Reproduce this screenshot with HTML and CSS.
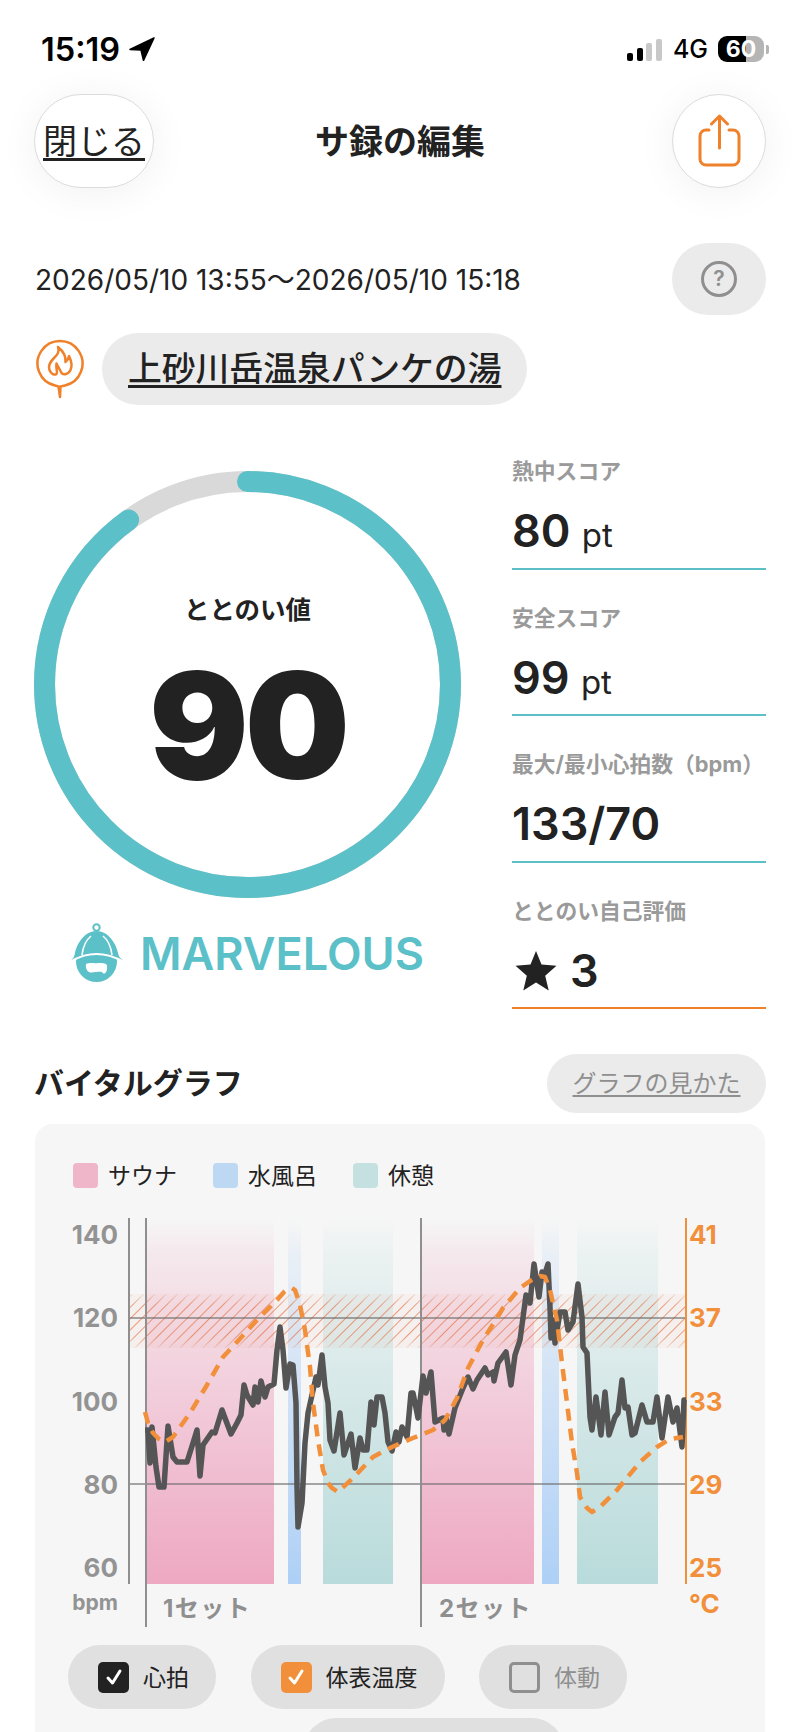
FILE: index.html
```html
<!DOCTYPE html>
<html lang="ja">
<head>
    <meta charset="UTF-8">
    <meta name="viewport" content="width=device-width, initial-scale=1.0">
    <title>サ録の編集</title>
    <link rel="stylesheet" href="styles.css">
</head>
<body>
<div class="screen">
    <div class="statusbar">
        <div class="status-left">
            <span class="clock">15:19</span>
            <svg class="location" width="26" height="24" viewBox="0 0 26 24"><path d="M25 1 L1 12.500 L12 13 L14.500 23.500 Z" fill="#000" stroke="#000" stroke-width="1.500" stroke-linejoin="round"/></svg>
        </div>
        <div class="status-right">
            <div class="signal">
                <span class="bar bar1"></span>
                <span class="bar bar2"></span>
                <span class="bar bar3"></span>
                <span class="bar bar4"></span>
            </div>
            <span class="network">4G</span>
            <div class="battery"><span class="battery-level">60</span><span class="battery-nub"></span></div>
        </div>
    </div>

    <div class="content">
        <div class="topbar">
            <a class="round-btn close-btn"><span class="close-text">閉じる</span></a>
            <h1 class="title">サ録の編集</h1>
            <a class="round-btn share-btn">
                <svg width="44" height="54" viewBox="0 0 44 54" fill="none" stroke="#f0812b" stroke-width="3" stroke-linecap="round" stroke-linejoin="round">
                    <path d="M12 16 H9 a6 6 0 0 0 -6 6 V45 a6 6 0 0 0 6 6 H36 a6 6 0 0 0 6 -6 V22 a6 6 0 0 0 -6 -6 H32"/>
                    <path d="M22.500 34 V2 M14.500 10 L22.500 2 L30.500 10"/>
                </svg>
            </a>
        </div>

        <div class="date-row">
            <span class="date">2026/05/10 13:55～2026/05/10 15:18</span>
            <a class="help-btn"><span class="help-mark">?</span></a>
        </div>

        <div class="place-row">
            <svg class="place-icon" width="48" height="60" viewBox="0 0 48 60" fill="none" stroke="#f0812b" stroke-width="2.500" stroke-linejoin="round" stroke-linecap="round">
                <path d="M19 46.500 A22.500 22.500 0 1 1 29 46.500 L24.500 47.500 L24 58 L22.500 47.500 Z"/>
                <path d="M22 8 C24 13 21 16 18 19 C14 23 12 27 13.500 31 C15 35 18.500 36.500 20.500 35 C22 33.500 19.500 29 20.500 24.500 C22 28 23.500 30 25 33 C26.500 36.500 32 36 34.500 31 C36.500 26.500 35 21 33 17 C32.500 20 31 22 29.500 23 C30 17 27 12 22 8 Z"/>
            </svg>
            <a class="place-pill">上砂川岳温泉パンケの湯</a>
        </div>

        <div class="score-section">
            <div class="score-left">
                <div class="ring">
                    <svg width="427" height="427" viewBox="0 0 427 427" fill="none" stroke-width="21">
                        <circle cx="213.500" cy="213.500" r="203" stroke="#d9d9d9"/>
                        <circle class="ring-value" cx="213.500" cy="213.500" r="203" stroke="#5cc0c8" stroke-linecap="round" stroke-dasharray="1148 1276"/>
                    </svg>
                    <div class="ring-text">
                        <div class="ring-label">ととのい値</div>
                        <div class="ring-number">90</div>
                    </div>
                </div>
                <div class="rank">
                    <svg width="52" height="60" viewBox="0 0 52 60">
                        <circle cx="25.500" cy="4.500" r="3.200" fill="none" stroke="#5cc0c8" stroke-width="2"/>
                        <circle cx="25.500" cy="38.500" r="20.500" fill="#5cc0c8"/>
                        <path d="M0 38.500 C8 33.500 17 31 25.500 31 C34 31 43 33.500 52 38.500" fill="none" stroke="#fff" stroke-width="2"/>
                        <path d="M0 37.500 C3 35 3 34 4 30 C6 20 14 8 25.500 8 C37 8 45 20 47 30 C48 34 49 35 52 37.500 C43 32 34 29.500 25.500 29.500 C17 29.500 8 32 0 37.500 Z" fill="#5cc0c8"/>
                        <path d="M20 13 C15 17 12 24 11 32 M32 13 C37 17 40 24 41 32" fill="none" stroke="#fff" stroke-width="1.600"/>
                        <path d="M15 41 C20 39 24 41 27 40 C31 40 34 40 36 42 C36 45 36.500 47 35 49 C34 51 32 51 31 49 C27 48 21 50.500 18 49 C15.500 48 14.500 44 15 41 Z" fill="#fff"/>
                    </svg>
                    <span class="rank-name">MARVELOUS</span>
                </div>
            </div>

            <div class="score-right">
                <div class="stat">
                    <div class="stat-label">熱中スコア</div>
                    <div class="stat-value">80 <span class="stat-unit">pt</span></div>
                </div>
                <div class="stat">
                    <div class="stat-label">安全スコア</div>
                    <div class="stat-value">99 <span class="stat-unit">pt</span></div>
                </div>
                <div class="stat">
                    <div class="stat-label">最大/最小心拍数（bpm）</div>
                    <div class="stat-value">133/70</div>
                </div>
                <div class="stat stat-orange">
                    <div class="stat-label">ととのい自己評価</div>
                    <div class="stat-value stat-rating">
                        <svg width="42" height="40" viewBox="0 0 42 40"><path d="M21 0 L26.500 13.500 L41.500 14.800 L30.200 24.700 L33.700 39.500 L21 31.600 L8.300 39.500 L11.800 24.700 L0.500 14.800 L15.500 13.500 Z" fill="#222"/></svg>
                        <span>3</span>
                    </div>
                </div>
            </div>
        </div>

        <div class="vital-head">
            <h2 class="vital-title">バイタルグラフ</h2>
            <a class="graph-help">グラフの見かた</a>
        </div>

        <div class="vital-card">
            <div class="legend">
                <div class="legend-item"><span class="swatch swatch-sauna"></span><span class="legend-text">サウナ</span></div>
                <div class="legend-item"><span class="swatch swatch-water"></span><span class="legend-text">水風呂</span></div>
                <div class="legend-item"><span class="swatch swatch-rest"></span><span class="legend-text">休憩</span></div>
            </div>

            <!-- viewBox uses page coordinates so the traced points stay readable -->
            <svg class="chart" width="730" height="420" viewBox="35 1210 730 420">
                <defs>
                    <linearGradient id="gradSauna" x1="0" y1="0" x2="0" y2="1">
                        <stop offset="0" stop-color="#eea8c2" stop-opacity="0"/>
                        <stop offset="0.1" stop-color="#eea8c2" stop-opacity="0.18"/>
                        <stop offset="1" stop-color="#eea8c2"/>
                    </linearGradient>
                    <linearGradient id="gradWater" x1="0" y1="0" x2="0" y2="1">
                        <stop offset="0" stop-color="#aed0f6" stop-opacity="0"/>
                        <stop offset="0.1" stop-color="#aed0f6" stop-opacity="0.18"/>
                        <stop offset="1" stop-color="#aed0f6"/>
                    </linearGradient>
                    <linearGradient id="gradRest" x1="0" y1="0" x2="0" y2="1">
                        <stop offset="0" stop-color="#b9dbdb" stop-opacity="0"/>
                        <stop offset="0.1" stop-color="#b9dbdb" stop-opacity="0.18"/>
                        <stop offset="1" stop-color="#b9dbdb"/>
                    </linearGradient>
                    <pattern id="hatch" width="8" height="8" patternUnits="userSpaceOnUse" patternTransform="rotate(45)">
                        <line x1="0" y1="0" x2="0" y2="8" stroke="#e2693a" stroke-width="1.500" stroke-opacity="0.85"/>
                    </pattern>
                    <linearGradient id="fadeBand" x1="0" y1="0" x2="0" y2="1">
                        <stop offset="0" stop-color="#fff" stop-opacity="0.2"/>
                        <stop offset="0.2" stop-color="#fff"/>
                        <stop offset="0.8" stop-color="#fff"/>
                        <stop offset="1" stop-color="#fff" stop-opacity="0.2"/>
                    </linearGradient>
                    <mask id="bandMask"><rect x="129" y="1294" width="557" height="54" fill="url(#fadeBand)"/></mask>
                </defs>

                <rect x="147" y="1218" width="127" height="366" fill="url(#gradSauna)"/>
                <rect x="288" y="1218" width="13" height="366" fill="url(#gradWater)"/>
                <rect x="323" y="1218" width="70" height="366" fill="url(#gradRest)"/>
                <rect x="422" y="1218" width="112" height="366" fill="url(#gradSauna)"/>
                <rect x="542" y="1218" width="17" height="366" fill="url(#gradWater)"/>
                <rect x="577" y="1218" width="81" height="366" fill="url(#gradRest)"/>

                <rect x="129" y="1294" width="557" height="54" fill="#f0926a" fill-opacity="0.05"/>
                <rect x="129" y="1294" width="557" height="54" fill="url(#hatch)" mask="url(#bandMask)"/>

                <line class="grid-line" x1="129" y1="1318" x2="686" y2="1318"/>
                <line class="grid-line" x1="129" y1="1484" x2="686" y2="1484"/>
                <line class="axis-line" x1="129" y1="1218" x2="129" y2="1584"/>
                <line class="axis-line" x1="146" y1="1218" x2="146" y2="1627"/>
                <line class="axis-line" x1="421" y1="1218" x2="421" y2="1627"/>
                <line class="axis-line-temp" x1="686" y1="1218" x2="686" y2="1584"/>

                <polyline class="heart-line" points="145,1430 148,1430 150,1463 152,1427 156,1467 159,1487 164,1487 168,1426 173,1457 177,1462 187,1462 193,1443 197,1430 200,1476 203,1445 212,1432 215,1433 222,1410 231,1434 237,1423 241,1415 244,1385 247,1395 253,1405 255,1387 258,1402 261,1381 265,1397 268,1387 274,1384 277,1350 280,1327 283,1350 286,1388 290,1364 293,1365 296,1403 297,1487 298,1527 302,1503 305,1443 308,1413 316,1377 318,1385 322,1355 325,1387 328,1403 330,1440 334,1451 340,1413 344,1455 351,1434 355,1468 360,1438 363,1450 367,1450 371,1402 374,1425 377,1397 382,1397 385,1413 388,1442 392,1451 396,1432 399,1442 402,1427 407,1437 411,1393 413,1393 418,1418 423,1376 426,1393 431,1372 435,1422 443,1418 444,1430 446,1418 449,1434 455,1408 463,1388 468,1377 473,1389 477,1380 485,1368 488,1375 493,1372 494,1381 498,1363 506,1352 511,1385 515,1355 520,1340 526,1295 530,1303 534,1264 539,1297 542,1272 544,1277 548,1264 550,1307 551,1338 553,1320 555,1343 560,1312 565,1312 568,1330 573,1322 578,1284 582,1317 583,1347 587,1353 590,1417 592,1430 596,1397 601,1435 605,1392 609,1435 615,1417 618,1413 622,1380 625,1408 628,1407 632,1435 635,1433 642,1405 647,1422 653,1422 657,1397 662,1438 668,1397 673,1422 677,1408 682,1447 684,1400 686,1400"/>
                <polyline class="temp-line" points="145,1412 148,1423 153,1433 159,1439 165,1442 173,1437 190,1413 207,1385 223,1357 237,1342 257,1320 277,1300 284,1292 288,1289 292,1288 295,1290 300,1305 305,1330 310,1367 313,1403 318,1440 323,1470 328,1483 332,1488 338,1492 353,1478 373,1457 392,1447 413,1438 433,1430 445,1420 457,1398 468,1368 483,1340 497,1318 503,1308 520,1288 533,1279 540,1276 545,1277 550,1290 557,1320 562,1363 567,1403 572,1443 577,1473 580,1497 587,1508 592,1512 600,1507 617,1490 640,1462 657,1447 670,1439 683,1437"/>

                <text class="tick" x="118" y="1244">140</text>
                <text class="tick" x="118" y="1327">120</text>
                <text class="tick" x="118" y="1411">100</text>
                <text class="tick" x="118" y="1494">80</text>
                <text class="tick" x="118" y="1577">60</text>
                <text class="tick tick-unit" x="118" y="1610">bpm</text>
                <text class="tick-temp" x="689" y="1244">41</text>
                <text class="tick-temp" x="689" y="1327">37</text>
                <text class="tick-temp" x="689" y="1411">33</text>
                <text class="tick-temp" x="689" y="1494">29</text>
                <text class="tick-temp" x="689" y="1577">25</text>
                <text class="tick-temp" x="689" y="1613">°C</text>
                <text class="set-label" x="163" y="1617">1セット</text>
                <text class="set-label" x="439" y="1617">2セット</text>
            </svg>

            <div class="toggles">
                <div class="toggle">
                    <span class="check check-dark"><svg width="22" height="22" viewBox="0 0 22 22"><path d="M5 12 L9.500 17 L17 5" fill="none" stroke="#fff" stroke-width="3" stroke-linecap="round" stroke-linejoin="round"/></svg></span>
                    <span class="toggle-text">心拍</span>
                </div>
                <div class="toggle">
                    <span class="check check-orange"><svg width="22" height="22" viewBox="0 0 22 22"><path d="M5 12 L9.500 17 L17 5" fill="none" stroke="#fff" stroke-width="3" stroke-linecap="round" stroke-linejoin="round"/></svg></span>
                    <span class="toggle-text">体表温度</span>
                </div>
                <div class="toggle toggle-off">
                    <span class="check check-empty"></span>
                    <span class="toggle-text">体動</span>
                </div>
            </div>
            <div class="more-pill"></div>
        </div>
    </div>
</div>
</body>
</html>
```
FILE: styles.css
```css
html, body {
    margin: 0;
    padding: 0;
    height: 1732px;
    overflow: hidden;
    background-color: #fff;
}

body {
    font-family: Inter, "Noto Sans CJK JP", sans-serif;
    font-optical-sizing: none;
    color: #222;
}

.screen {
    height: 1732px;
    overflow: hidden;
}

/* status bar */
.statusbar {
    box-sizing: border-box;
    height: 94px;
    padding: 4px 31px 0 41px;
    display: flex;
    justify-content: space-between;
    align-items: center;
    color: #000;
}

.status-left {
    display: flex;
    align-items: center;
    gap: 9px;
}

.clock {
    font-size: 32.500px;
    font-weight: 600;
}

.status-right {
    display: flex;
    align-items: center;
}

.signal {
    display: flex;
    align-items: flex-end;
    gap: 3.5px;
    height: 22px;
    margin-top: 1px;
}

.bar {
    width: 6px;
    border-radius: 2px;
    background-color: #000;
}

.bar1 { height: 8px; }
.bar2 { height: 13px; }
.bar3 { height: 18px; background-color: #c8c8c8; }
.bar4 { height: 22px; background-color: #c8c8c8; }

.network {
    font-size: 25px;
    font-weight: 500;
    margin: 0 10px 0 11px;
}

.battery {
    display: flex;
    align-items: center;
    gap: 2px;
}

.battery-level {
    width: 46px;
    height: 26px;
    border-radius: 9px;
    background: linear-gradient(90deg, #000 61%, #b5b5b5 61%);
    color: #fff;
    font-size: 23px;
    font-weight: 700;
    line-height: 26px;
    text-align: center;
}

.battery-nub {
    width: 3px;
    height: 9px;
    border-radius: 0 2px 2px 0;
    background-color: #b5b5b5;
}

/* main */
.content {
    padding: 0 34px;
}

.topbar {
    height: 94px;
    display: grid;
    grid-template-columns: 1fr auto 1fr;
    align-items: center;
}

.round-btn {
    box-sizing: border-box;
    height: 94px;
    border: 1px solid #dcdcdc;
    border-radius: 47px;
    background-color: #fff;
    box-shadow: 0 4px 40px rgba(0, 0, 0, 0.06);
    display: flex;
    justify-content: center;
    align-items: center;
}

.close-btn {
    width: 120px;
    font-size: 34px;
}

.close-text {
    margin-bottom: 4px;
    text-decoration: underline;
    text-underline-offset: 4px;
}

.share-btn {
    width: 94px;
    justify-self: end;
}

.title {
    margin: 0 0 4px;
    font-size: 34px;
    font-weight: 700;
}

.date-row {
    height: 72px;
    margin-top: 55px;
    display: flex;
    justify-content: space-between;
    align-items: center;
}

.date {
    margin: 0 0 3px 1px;
    font-size: 28px;
}

.help-btn {
    width: 94px;
    height: 72px;
    border-radius: 36px;
    background-color: #ebebeb;
    display: flex;
    justify-content: center;
    align-items: center;
}

.help-mark {
    box-sizing: border-box;
    width: 36px;
    height: 36px;
    border: 3px solid #8f8f8f;
    border-radius: 50%;
    color: #8f8f8f;
    font-size: 21px;
    font-weight: 600;
    line-height: 30px;
    text-align: center;
}

.place-row {
    margin-top: 18px;
    display: flex;
    align-items: center;
    gap: 18px;
}

.place-icon {
    margin-left: 2px;
}

.place-pill {
    height: 72px;
    padding: 0 26px;
    border-radius: 36px;
    background-color: #ebebeb;
    font-size: 33.800px;
    font-weight: 500;
    line-height: 72px;
    text-decoration: underline;
    text-underline-offset: 4px;
}

/* score */
.score-section {
    margin-top: 48px;
    display: grid;
    grid-template-columns: 427px 254px;
    column-gap: 51px;
}

.score-left {
    padding-top: 18px;
}

.ring {
    position: relative;
    width: 427px;
    height: 427px;
}

.ring-value {
    transform: rotate(-90deg);
    transform-origin: center;
}

.ring-text {
    position: absolute;
    inset: 0;
    text-align: center;
}

.ring-label {
    margin-top: 122px;
    font-size: 25.500px;
    font-weight: 700;
    line-height: 34px;
}

.ring-number {
    margin-top: 14px;
    font-size: 148px;
    font-weight: 900;
    font-variation-settings: "opsz" 14;
    line-height: 170px;
    letter-spacing: -4px;
}

.rank {
    margin-top: 25px;
    display: flex;
    justify-content: center;
    align-items: center;
    gap: 17px;
}

.rank-name {
    font-size: 45px;
    font-weight: 600;
    color: #5cc0c8;
}

.score-right {
    display: flex;
    flex-direction: column;
    gap: 30px;
}

.stat {
    padding-bottom: 8.500px;
    border-bottom: 2px solid #5cc0c8;
}

.stat-orange {
    border-bottom-color: #f0812b;
}

.stat-label {
    font-size: 21.800px;
    font-weight: 700;
    line-height: 36px;
    color: #9a9a9a;
}

.stat-value {
    height: 56px;
    margin-top: 14px;
    font-size: 45px;
    font-weight: 600;
    line-height: 56px;
}

.stat-unit {
    font-size: 33px;
    font-weight: 400;
}

.stat-rating {
    display: flex;
    align-items: center;
    gap: 13px;
    padding-left: 3px;
}

/* vital graph */
.vital-head {
    margin-top: 45px;
    height: 59px;
    display: flex;
    justify-content: space-between;
    align-items: center;
}

.vital-title {
    margin: 0 0 5px;
    font-size: 30px;
    font-weight: 700;
}

.graph-help {
    width: 219px;
    height: 59px;
    border-radius: 30px;
    background-color: #ebebeb;
    color: #8f8f8f;
    font-size: 24px;
    line-height: 59px;
    text-align: center;
    text-decoration: underline;
    text-underline-offset: 3px;
}

.vital-card {
    margin: 11px 1px 0;
    padding: 38px 0 40px;
    border-radius: 18px;
    background-color: #f6f6f6;
}

.legend {
    margin-left: 38px;
    display: flex;
    gap: 36px;
}

.legend-item {
    display: flex;
    align-items: center;
    gap: 10px;
    height: 26px;
    font-size: 23px;
}

.legend-text {
    margin-bottom: 3px;
}

.swatch {
    width: 25px;
    height: 25px;
    border-radius: 4px;
}

.swatch-sauna { background-color: #efb5c9; }
.swatch-water { background-color: #bcd8f3; }
.swatch-rest { background-color: #c5e0e0; }

.chart {
    display: block;
    margin-top: 22px;
}

.grid-line {
    stroke: #6e6e6e;
    stroke-opacity: 0.6;
    stroke-width: 2;
}

.axis-line {
    stroke: #8f8f8f;
    stroke-width: 2;
}

.axis-line-temp {
    stroke: #f28f3b;
    stroke-width: 2;
}

.heart-line {
    fill: none;
    stroke: #555;
    stroke-width: 5.500;
    stroke-linejoin: round;
}

.temp-line {
    fill: none;
    stroke: #f28f3b;
    stroke-width: 4.500;
    stroke-dasharray: 12 8;
    stroke-linejoin: round;
}

.tick, .tick-temp {
    font-size: 26px;
    font-weight: 700;
}

.tick {
    fill: #939393;
    text-anchor: end;
}

.tick-unit {
    font-size: 21px;
    font-weight: 700;
}

.tick-temp {
    fill: #f28f3b;
}

.set-label {
    fill: #8f8f8f;
    font-size: 24px;
    font-weight: 700;
    letter-spacing: 1.500px;
}

.toggles {
    margin: 15px 0 0 33px;
    display: flex;
    gap: 34.500px;
}

.toggle {
    height: 64px;
    padding: 0 27px 0 30px;
    border-radius: 32px;
    background-color: #e0e0e0;
    display: flex;
    align-items: center;
    gap: 14px;
    font-size: 23px;
}

.toggle-text {
    margin-bottom: 3px;
}

.toggle-off {
    color: #8f8f8f;
}

.check {
    box-sizing: border-box;
    width: 31px;
    height: 31px;
    border-radius: 5px;
    display: flex;
    justify-content: center;
    align-items: center;
}

.check-dark { background-color: #222; }
.check-orange { background-color: #f28f3b; }
.check-empty { border: 3px solid #8f8f8f; }

.more-pill {
    width: 260px;
    height: 64px;
    margin: 9px 0 0 269px;
    border-radius: 32px;
    background-color: #e0e0e0;
}
```
